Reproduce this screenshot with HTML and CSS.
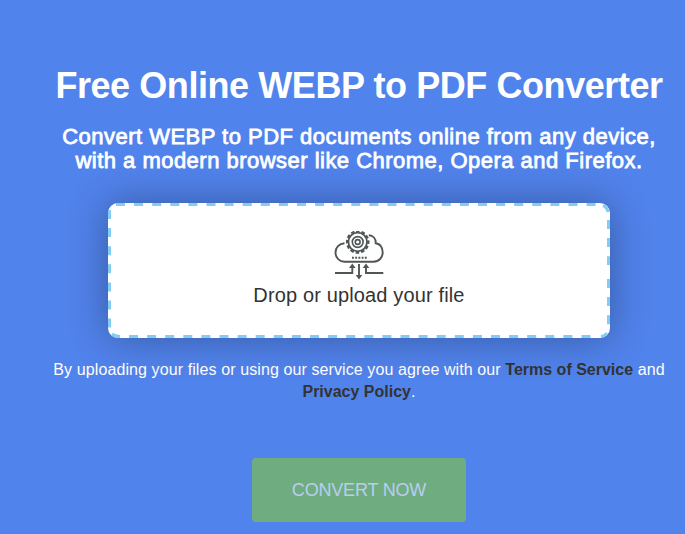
FILE: index.html
```html
<!DOCTYPE html>
<html lang="en">
<head>
<meta charset="utf-8">
<title>Free Online WEBP to PDF Converter</title>
<link rel="stylesheet" href="styles.css">
</head>
<body>
<main class="converter">
<h1 class="title">Free Online WEBP to PDF Converter</h1>
<h2 class="subtitle">Convert WEBP to PDF documents online from any device,<br>with a modern browser like Chrome, Opera and Firefox.</h2>
<div class="dropzone">
<svg class="dash" width="502" height="135" viewBox="0 0 502 135">
<path d="M8 1.500H494" stroke-dasharray="9 9.100"/>
<path d="M495 2.500Q499 4 500 9"/>
<path d="M500.500 17V62M500.500 76V122" stroke-dasharray="9 9.100"/>
<path d="M493 133.500Q497 133 499 130"/>
<path d="M4 131Q7 133.500 12 133.500"/>
<path d="M21 133.500H491" stroke-dasharray="9 9.100"/>
<path d="M1.500 7V126" stroke-dasharray="9 9.100"/>
</svg>
<svg class="cloud" width="50" height="50" viewBox="0 0 50 50" fill="none" stroke="#505556" stroke-width="1.9">
<path d="M10.500 12.200C5 12.500 1.500 16.500 1.500 21.500C1.500 27 5.500 30.700 10.500 30.700H39.500C45 30.700 48.700 26.500 48.700 21.500C48.700 16.500 46 13 41.700 12.300C42 7.500 39 4.500 34.800 4.200"/>
<circle cx="23.700" cy="11" r="9.300" stroke-width="1.800"/>
<circle cx="23.700" cy="11" r="10.700" stroke-width="2.200" stroke-dasharray="3.500 2.102" transform="rotate(-99 23.700 11)"/>
<circle cx="23.700" cy="11" r="5.400" stroke-width="1.600"/>
<circle cx="23.700" cy="11" r="2.400" stroke-width="1.600"/>
<path d="M18 26.800h15" stroke-dasharray="1.900 1.300"/>
<path d="M1 42H18.300V35M25 33V45M49.300 42H32V35"/>
<path d="M15 37L18.300 32.500L21.600 37ZM21.700 44L25 48.500L28.300 44ZM28.700 37L32 32.500L35.300 37Z" fill="#505556" stroke="none"/>
</svg>
<p class="prompt">Drop or upload your file</p>
</div>
<p class="terms">By uploading your files or using our service you agree with our <b>Terms of Service</b> and<br><b>Privacy Policy</b>.</p>
<button class="convert">CONVERT NOW</button>
</main>
</body>
</html>
```
FILE: styles.css
```css
* { box-sizing: border-box; }
body { margin: 0; background: #5183ec; font-family: "Liberation Sans", Arial, sans-serif; color: #fff; overflow: hidden; }
.converter { width: 718px; height: 534px; padding-top: 64px; display: flex; flex-direction: column; align-items: center; text-align: center; }
.title { margin: 0; font-size: 36px; line-height: 43px; letter-spacing: -.43px; white-space: nowrap; }
.subtitle { margin: 18px 0 0; font-size: 22px; font-weight: 400; -webkit-text-stroke: .8px #fff; letter-spacing: .48px; line-height: 24px; white-space: nowrap; }
.dropzone { position: relative; width: 502px; height: 135px; margin-top: 30px; padding-top: 28px; border-radius: 10px; background: #fff; box-shadow: 0 0 40px rgba(0,0,0,.32); }
.dash { position: absolute; left: 0; top: 0; fill: none; stroke: #83cdf2; stroke-width: 3; }
.cloud { display: block; margin: 0 auto; }
.prompt { margin: 2px 0 0; color: #333; font-size: 20px; letter-spacing: .14px; line-height: 24px; }
.terms { margin: 21px 0 0; font-size: 16px; letter-spacing: .1px; line-height: 22px; white-space: nowrap; }
.terms b { color: #333; letter-spacing: 0; }
.convert { margin-top: 55px; width: 214px; height: 64px; padding: 0; border: 0; border-radius: 4px; background: #6fad80; color: #b9cdf0; font: 18px "Liberation Sans", Arial, sans-serif; letter-spacing: -.18px; }
```
